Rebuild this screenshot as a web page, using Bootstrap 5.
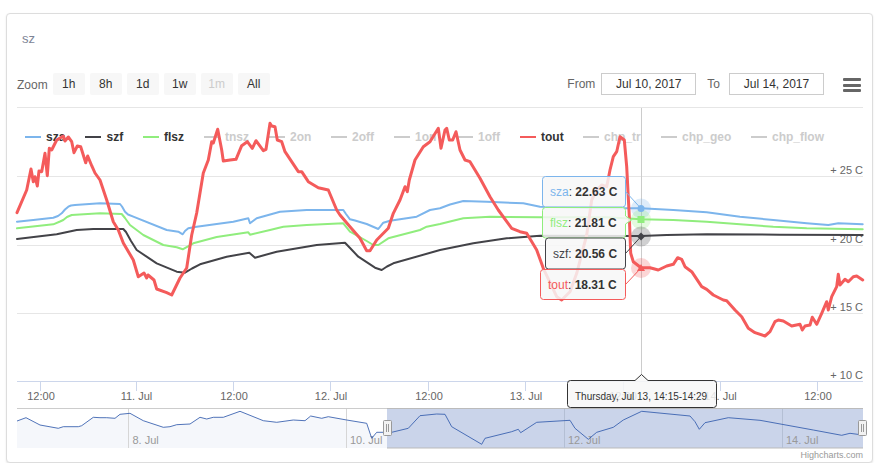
<!DOCTYPE html>
<html lang="en">
<head>
<meta charset="utf-8">
<title>sz</title>
<link rel="stylesheet" href="https://cdn.jsdelivr.net/npm/bootstrap@5.3.0/dist/css/bootstrap.min.css">
<style>
html, body { background: #fff; margin: 0; overflow: hidden; }
body { font-family: "Liberation Sans", Arial, sans-serif; color: #333; }
.chart-card { margin: 13px 0 0 6px; width: 867px; height: 450px; border: 1px solid #ddd; border-radius: 4px; box-shadow: 0 1px 2px rgba(0,0,0,.1); padding: 0 10px; display: block; }
.chart-name { height: 59px; padding: 17px 0 0 5px; font-size: 13px; line-height: 16px; color: #7d8496; }
.range-bar { height: 34px; align-items: flex-start; font-size: 12px; color: #666; }
.range-label { line-height: 24px; margin-right: 5px; }
.range-btn { width: 32px; height: 22px; padding: 0; margin-right: 5px; border: 0; border-radius: 2px; background: #f7f7f7; color: #333; font-size: 12px; line-height: 19px; }
.range-btn:disabled { background: #f7f7f7; color: #ccc; opacity: 1; }
.date-label { line-height: 22px; }
.date-input { width: 95px; height: 22px; padding: 0; border: 1px solid #ccc; border-radius: 0; text-align: center; font-size: 12px; color: #333; margin: 0 11px 0 6px; background: #fff; }
.date-input-to { margin-left: 9px; }
.burger-btn { width: 18px; height: 14px; margin: 5px 1px 0 8px; display: flex; flex-direction: column; justify-content: space-between; }
.burger-btn span { display: block; height: 3px; background: #666; border-radius: 1px; }
.plot-svg { display: block; overflow: visible; }
.plot-svg text { font-family: "Liberation Sans", Arial, sans-serif; }
.ax { font-size: 11px; fill: #666; }
.nav-lab { font-size: 11px; fill: #999; }
.leg { font-size: 12px; font-weight: 700; fill: #333; }
.leg-off { fill: #ccc; }
.tip { font-size: 12px; fill: #333; }
.tip-b { font-weight: 700; }
</style>
</head>
<body>
<div class="card chart-card">
  <div class="chart-name">sz</div>
  <div class="d-flex range-bar">
    <span class="range-label">Zoom</span>
    <button class="btn range-btn" type="button">1h</button>
    <button class="btn range-btn" type="button">8h</button>
    <button class="btn range-btn" type="button">1d</button>
    <button class="btn range-btn" type="button">1w</button>
    <button class="btn range-btn" type="button" disabled>1m</button>
    <button class="btn range-btn" type="button">All</button>
    <span class="ms-auto date-label">From</span>
    <input class="date-input" value="Jul 10, 2017" readonly>
    <span class="date-label">To</span>
    <input class="date-input date-input-to" value="Jul 14, 2017" readonly>
    <div class="burger-btn"><span></span><span></span><span></span></div>
  </div>
  <svg class="plot-svg" width="846" height="353" viewBox="17 107 846 353" xmlns="http://www.w3.org/2000/svg">
    <!-- grid -->
    <g stroke="#e6e6e6" stroke-width="1">
      <line x1="17" x2="863" y1="107.5" y2="107.5"/>
      <line x1="17" x2="863" y1="176.5" y2="176.5"/>
      <line x1="17" x2="863" y1="245.5" y2="245.5"/>
      <line x1="17" x2="863" y1="313.5" y2="313.5"/>
    </g>
    <line x1="17" x2="863" y1="381.5" y2="381.5" stroke="#ccd6eb"/>
    <g stroke="#ccd6eb">
      <line x1="40.5" x2="40.5" y1="382" y2="391"/>
      <line x1="136.5" x2="136.5" y1="382" y2="391"/>
      <line x1="233.5" x2="233.5" y1="382" y2="391"/>
      <line x1="330.5" x2="330.5" y1="382" y2="391"/>
      <line x1="428.5" x2="428.5" y1="382" y2="391"/>
      <line x1="525.5" x2="525.5" y1="382" y2="391"/>
      <line x1="623.5" x2="623.5" y1="382" y2="391"/>
      <line x1="720.5" x2="720.5" y1="382" y2="391"/>
      <line x1="817.5" x2="817.5" y1="382" y2="391"/>
    </g>
    <!-- y labels -->
    <g class="ax" text-anchor="end">
      <text x="863" y="174">+ 25 C</text>
      <text x="863" y="243">+ 20 C</text>
      <text x="863" y="311">+ 15 C</text>
      <text x="863" y="379">+ 10 C</text>
    </g>
    <!-- x labels -->
    <g class="ax" text-anchor="middle">
      <text x="41" y="400">12:00</text>
      <text x="136.500" y="400">11. Jul</text>
      <text x="234" y="400">12:00</text>
      <text x="331" y="400">12. Jul</text>
      <text x="429" y="400">12:00</text>
      <text x="526" y="400">13. Jul</text>
      <text x="623" y="400">12:00</text>
      <text x="720.500" y="400">14. Jul</text>
      <text x="818" y="400">12:00</text>
    </g>
    <!-- legend -->
    <g stroke-width="2">
      <line x1="25" x2="41" y1="137" y2="137" stroke="#7cb5ec"/>
      <line x1="85" x2="101" y1="137" y2="137" stroke="#434348"/>
      <line x1="143" x2="159" y1="137" y2="137" stroke="#90ed7d"/>
      <line x1="204" x2="220" y1="137" y2="137" stroke="#ccc"/>
      <line x1="269" x2="285" y1="137" y2="137" stroke="#ccc"/>
      <line x1="331" x2="347" y1="137" y2="137" stroke="#ccc"/>
      <line x1="394" x2="410" y1="137" y2="137" stroke="#ccc"/>
      <line x1="457" x2="473" y1="137" y2="137" stroke="#ccc"/>
      <line x1="520" x2="536" y1="137" y2="137" stroke="#f45b5b"/>
      <line x1="583" x2="599" y1="137" y2="137" stroke="#ccc"/>
      <line x1="661" x2="677" y1="137" y2="137" stroke="#ccc"/>
      <line x1="751" x2="767" y1="137" y2="137" stroke="#ccc"/>
    </g>
    <g class="leg">
      <text x="46" y="141">sza</text>
      <text x="106.500" y="141">szf</text>
      <text x="164" y="141">flsz</text>
      <text x="225" y="141" class="leg-off">tnsz</text>
      <text x="290" y="141" class="leg-off">2on</text>
      <text x="352" y="141" class="leg-off">2off</text>
      <text x="415" y="141" class="leg-off">1on</text>
      <text x="478" y="141" class="leg-off">1off</text>
      <text x="541" y="141">tout</text>
      <text x="604" y="141" class="leg-off">chp_tr</text>
      <text x="682" y="141" class="leg-off">chp_geo</text>
      <text x="772" y="141" class="leg-off">chp_flow</text>
    </g>
    <!-- crosshair -->
    <line x1="641.5" x2="641.5" y1="108" y2="375" stroke="#ccc"/>
    <!-- series -->
    <g fill="none" stroke-linejoin="round" stroke-linecap="round">
      <polyline stroke="#7cb5ec" stroke-width="2" points="17,221.7 33.3,220 53.3,217.7 58,216 61.7,213.3 65,209.5 68.3,206.7 71,205.5 75,205 100,203.3 120,204 122,206.5 125,211.7 128,214.5 133.3,216.7 166.7,230 178.3,231.7 182.7,234.3 185,231 188.300,228.300 196.7,226.7 216.7,224 233.3,221.7 248.3,218.3 250,223.3 256.7,218.3 280,211.7 306.7,210 343.3,210 346,214 350,219.3 355,220.5 366.7,224 378.3,229 383.3,222.7 390,220.7 416.7,216.7 430,210 440,208.300 450,204.500 463.3,201 486.7,201.7 523.3,203.3 540,206.7 606.7,208.3 641,208.3 673.3,210 706.7,212.3 740,216.7 773.3,220 806.7,223.3 828.3,225 838.3,223.3 862.7,224.3"/>
      <polyline stroke="#90ed7d" stroke-width="2" points="17,228.3 53.3,224.3 60,221.5 63.3,220 67,217 71.7,215 100,213.3 121.7,214 125,218 130,225 143.3,235 163.3,245 176.7,247.3 182.7,249.3 193.3,243.3 216.7,237 248.3,232.3 250,234.7 270,230 283.3,226.7 306.7,225 343.3,223.3 350,231.7 366.7,241 373.3,245 378.3,245 388.3,238.3 420,230 426.7,226.700 440,224 450,221.500 463.3,218.3 490,216.7 540,217.3 606.7,217.3 641,219.3 673.3,220 706.7,221.7 740,224.3 773.3,226.7 806.7,228.3 862.7,229.3"/>
      <polyline stroke="#434348" stroke-width="2" points="17,239 56.7,234.3 76.7,230 93.3,229 123.3,229 126,232 131,241 136.7,250 156.7,263.3 176.7,271.7 185,272.7 192,268.500 200,264.3 226.7,256.7 249.3,252.7 255,257.7 276.7,251.7 316.7,245 345,242.7 351,249 358.3,256.7 375,267.700 381.7,270 387,266.500 393.3,263.3 440,250 473.3,243.3 506.7,238.3 540,235.7 641,236 666.7,235 706.7,234.3 780,234.7 862.7,235"/>
      <polyline stroke="#f45b5b" stroke-width="3" points="17,212.7 26.7,190 31,169 33.3,181.7 35,176.7 37.3,186 39,171 41.7,171.7 45,153.3 47.3,175.7 49.3,148.3 51.7,150 56.7,140 63.3,136 65,141 68.3,137 71.7,141.7 74,152.7 77.3,146 80.7,146.7 85.7,162.7 87.7,156 91.7,165.7 95,173 100,180 106.7,200 113.3,221.7 118.3,230 123.3,243 133.3,260 138.3,276.7 144,273 146.7,278 148,275 154,280 156.7,289 166.7,292.7 171.7,295 180,278 186.7,268 191.7,235 196.7,213 203.3,173 208.3,160 211.7,141.7 213.3,143 217.7,129.3 221.7,150 223.3,161 230,160 236,159.3 241.7,145.7 247.3,141.7 252.3,148.3 256,140.7 263.3,150.7 266,149.3 270,123.3 271.7,126 275,126.7 277.3,140 281.7,141.7 285,151.7 298.3,171.7 301.7,171.7 308.3,181.7 318.3,187.7 328.3,190 336.7,210 340,215 350,226.7 360,238.3 366.7,250.7 370,250.7 376.7,240 388.3,228.3 393.3,213.3 400,200 405,186.700 407.3,191.7 409.3,180 415,160 423.3,146.7 430,141.7 438.3,128.3 441,148.3 445,130 446.7,128.3 449.3,140 452.7,140 456,131.7 460,150 465,160 470,161.7 480,178.3 490,196.7 498.3,210 511.7,228.3 520,231.7 526.7,233.3 536.7,250 543.3,268.3 556.7,296.7 561.7,300 570,291.7 576.7,273.3 586.7,235 591.7,200 596.7,190 601.7,185 606.7,186.7 610,170 613.3,156.7 616.7,151.7 620,136.7 624.3,140 626.7,166.7 629.3,216.7 630.7,253.3 633.3,261.7 641,267.7 650,267.7 658.3,270 666.7,266 673.3,264.3 677.7,257.7 681.7,259.3 685,266.7 691.7,271.7 701.7,286.7 706.7,289.3 713.3,295 723.3,300 726.7,300.7 735,310 741.7,316.7 748.3,328.3 755,332.7 765,336 770,331.7 775,321.7 778.3,320 783.3,321 791.7,326 800,324.3 802.3,330 805,326 810,325 812.3,317.3 816.7,324.3 821.7,313.3 826.7,301.7 828.3,310 831.7,296.7 836.7,286.7 838.3,274.3 840,285 845,279.3 848.3,281.7 853.3,276.7 856.7,276 862.7,280"/>
    </g>
    <!-- markers -->
    <circle cx="641" cy="208.500" r="10" fill="#7cb5ec" opacity=".25"/>
    <circle cx="641" cy="219.500" r="10" fill="#90ed7d" opacity=".25"/>
    <circle cx="641" cy="236.500" r="10" fill="#434348" opacity=".25"/>
    <circle cx="641" cy="268" r="10" fill="#f45b5b" opacity=".25"/>
    <circle cx="641" cy="208.500" r="3.500" fill="#7cb5ec"/>
    <rect x="637.500" y="216" width="7" height="7" fill="#90ed7d"/>
    <path d="M641 232.500 L645 236.500 L641 240.500 L637 236.500 Z" fill="#434348"/>
    <path d="M641 264 L645 271 L637 271 Z" fill="#f45b5b"/>
    <!-- tooltips -->
    <g fill-opacity=".85" fill="#f7f7f7" stroke-width="1">
      <path d="M625.500 191.500 L641 208.500" fill="none" stroke="#7cb5ec"/>
      <rect x="542.500" y="176.500" width="83" height="30.500" rx="3" stroke="#7cb5ec"/>
      <path d="M545.500 207.500 H622.500 Q625.500 207.500 625.500 210.500 V216 L631.500 220 L625.500 224 V235 Q625.500 238 622.500 238 H545.500 Q542.500 238 542.500 235 V210.500 Q542.500 207.500 545.500 207.500 Z" stroke="#90ed7d"/>
      <path d="M625.500 253.500 L641 236.500" fill="none" stroke="#434348"/>
      <rect x="545.500" y="238" width="80" height="31" rx="3" stroke="#434348"/>
      <path d="M625.500 284.500 L641 268" fill="none" stroke="#f45b5b"/>
      <rect x="540.500" y="269.500" width="85" height="30" rx="3" stroke="#f45b5b"/>
    </g>
    <g class="tip">
      <text x="550" y="196"><tspan fill="#7cb5ec">sza</tspan>: <tspan class="tip-b">22.63 C</tspan></text>
      <text x="550" y="227"><tspan fill="#90ed7d">flsz</tspan>: <tspan class="tip-b">21.81 C</tspan></text>
      <text x="553" y="258"><tspan fill="#434348">szf</tspan>: <tspan class="tip-b">20.56 C</tspan></text>
      <text x="548" y="289"><tspan fill="#f45b5b">tout</tspan>: <tspan class="tip-b">18.31 C</tspan></text>
    </g>
    <!-- navigator -->
    <polygon fill="#335cad" fill-opacity=".05" points="17,448 17,421 26,417.7 40,425 58.3,428.3 63.3,426.7 78.3,426.7 81.7,425.7 93.3,417.3 100,417.7 106.7,417.7 115,418.3 120,414.3 130,413.3 143.3,420.7 163.3,427.3 170,426.7 176.7,424.7 190,424 200,417.3 206.7,419 213.3,417.3 223.3,417.3 240,411.3 263.3,420.7 276.7,422.3 293.3,420 305,420.7 310.7,416 321.7,418.3 328.3,416.7 346.7,420 366.7,423.3 371.7,438.3 376.7,432.3 387,432.3 387,448"/>
    <rect x="387" y="408" width="476" height="40" fill="#6685c2" fill-opacity=".35"/>
    <line x1="17" x2="387" y1="408.500" y2="408.500" stroke="#ccc"/>
    <line x1="387" x2="863" y1="408.500" y2="408.500" stroke="#bbb"/>
    <line x1="387" x2="863" y1="448" y2="448" stroke="#bbb"/>
    <g stroke="#d6d6d6">
      <line x1="128.500" x2="128.500" y1="409" y2="448"/>
      <line x1="346.500" x2="346.500" y1="409" y2="448"/>
    </g>
    <g stroke="#b4bfd4">
      <line x1="564.500" x2="564.500" y1="409" y2="448"/>
      <line x1="782.500" x2="782.500" y1="409" y2="448"/>
    </g>
    <g class="nav-lab">
      <text x="132.500" y="444">8. Jul</text>
      <text x="350" y="444">10. Jul</text>
      <text x="568" y="444">12. Jul</text>
      <text x="786" y="444">14. Jul</text>
    </g>
    <polyline fill="none" stroke="#335cad" stroke-opacity=".85" stroke-width="1" stroke-linejoin="round" points="17,421 26,417.7 40,425 58.3,428.3 63.3,426.7 78.3,426.7 81.7,425.7 93.3,417.3 100,417.7 106.7,417.7 115,418.3 120,414.3 130,413.3 143.3,420.7 163.3,427.3 170,426.7 176.7,424.7 190,424 200,417.3 206.7,419 213.3,417.3 223.3,417.3 240,411.3 263.3,420.7 276.7,422.3 293.3,420 305,420.7 310.7,416 321.7,418.3 328.3,416.7 346.7,420 366.7,423.3 371.7,438.3 376.7,432.3 383.3,432.3 391.7,432.3 408.3,428.3 420,415.7 436.7,414 445,414.3 451.7,426.7 481.7,444.3 485,438.3 511.7,431.7 518.3,429.3 520.7,432.7 536.7,422.3 570,420.3 575,428.3 588.3,439.3 596.7,432.3 613.3,427.3 623.3,420 641.7,411.3 690,416 695,421.7 699.3,429.3 705,422.7 728.3,417.7 760,420.3 813.3,430 841.7,435.3 850,433.3 862.7,435"/>
    <!-- navigator handles -->
    <g fill="#f2f2f2" stroke="#999">
      <rect x="383.500" y="420.500" width="8" height="15" rx="1"/>
      <rect x="858.500" y="420.500" width="8" height="15" rx="1"/>
      <path d="M386.500 424 V432 M388.500 424 V432 M861.500 424 V432 M863.500 424 V432" fill="none"/>
    </g>
    <!-- crosshair label -->
    <path d="M570.500 380.500 H635 L641.500 374.500 L648 380.500 H713.500 Q716.500 380.500 716.500 383.500 V404.500 Q716.500 407.500 713.500 407.500 H570.500 Q567.500 407.500 567.500 404.500 V383.500 Q567.500 380.500 570.500 380.500 Z" fill="#f7f7f7" fill-opacity=".85" stroke="#333"/>
    <text x="575" y="399.500" font-size="10" fill="#333">Thursday, Jul 13, 14:15-14:29</text>
    <text x="863" y="458" text-anchor="end" font-size="9" fill="#999">Highcharts.com</text>
  </svg>
</div>
</body>
</html>
